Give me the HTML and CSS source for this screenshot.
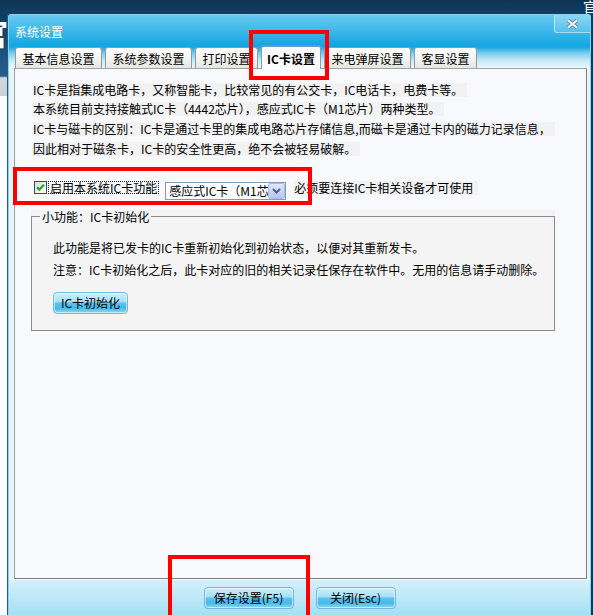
FILE: index.html
```html
<!DOCTYPE html>
<html lang="zh-CN">
<head>
<meta charset="utf-8">
<title>系统设置</title>
<link rel="stylesheet" href="styles.css">
</head>
<body>
<div class="topbar"><span class="top-glyph">官</span></div>
<div class="main">
  <div class="leftstrip"><span class="left-glyph">官</span></div>
  <div class="dialog">
    <div class="titlebar">
      <span class="title">系统设置</span>
      <div class="close">
        <svg width="13" height="10" viewBox="0 0 13 10">
          <path d="M2 1.5 L11 8.5 M11 1.5 L2 8.5" stroke="#6f8796" stroke-width="4" fill="none"/>
          <path d="M2 1.5 L11 8.5 M11 1.5 L2 8.5" stroke="#eef3f6" stroke-width="2.2" fill="none"/>
        </svg>
      </div>
    </div>
    <div class="tabs">
      <div class="tab">基本信息设置</div>
      <div class="tab">系统参数设置</div>
      <div class="tab">打印设置</div>
      <div class="tab active">IC卡设置</div>
      <div class="tab">来电弹屏设置</div>
      <div class="tab">客显设置</div>
    </div>
    <div class="panel">
      <div class="intro">
        <p><span>IC卡是指集成电路卡，又称智能卡，比较常见的有公交卡，IC电话卡，电费卡等。</span></p>
        <p><span>本系统目前支持接触式IC卡（4442芯片），感应式IC卡（M1芯片）两种类型。</span></p>
        <p><span>IC卡与磁卡的区别：IC卡是通过卡里的集成电路芯片存储信息,而磁卡是通过卡内的磁力记录信息，</span></p>
        <p><span>因此相对于磁条卡，IC卡的安全性更高，绝不会被轻易破解。</span></p>
      </div>
      <div class="enable">
        <span class="cb">
          <svg width="11" height="11" viewBox="0 0 11 11"><path d="M2 5.2 L4.3 7.6 L9 2.8" stroke="#22a322" stroke-width="2.2" fill="none"/></svg>
        </span>
        <span class="cblabel">启用本系统IC卡功能</span>
        <div class="combo">
          <span class="combo-text">感应式IC卡（M1芯片）</span>
          <span class="combo-btn">
            <svg width="15" height="14" viewBox="0 0 15 14"><path d="M4 5 L7.5 8.5 L11 5" stroke="#4d6185" stroke-width="2" fill="none"/></svg>
          </span>
        </div>
        <span class="hint">必须要连接IC卡相关设备才可使用</span>
      </div>
      <fieldset class="group">
        <legend>小功能：IC卡初始化</legend>
        <div class="gbody">
          <p>此功能是将已发卡的IC卡重新初始化到初始状态，以便对其重新发卡。</p>
          <p>注意：IC卡初始化之后，此卡对应的旧的相关记录任保存在软件中。无用的信息请手动删除。</p>
          <button class="btn btn-ic">IC卡初始化</button>
        </div>
      </fieldset>
    </div>
    <div class="footer">
      <button class="btn btn-save">保存设置(F5)</button>
      <button class="btn btn-close">关闭(Esc)</button>
    </div>
  </div>
  <div class="rightstrip"></div>
</div>
<div class="mark mark-tab"></div>
<div class="mark mark-enable"></div>
<div class="mark mark-save"></div>
</body>
</html>
```

FILE: styles.css
```css
html, body {
  margin: 0;
  padding: 0;
}
body {
  position: relative;
  width: 593px;
  height: 615px;
  overflow: hidden;
  background: #0f3b5f;
  font-family: "Noto Sans CJK SC", "Liberation Sans", sans-serif;
  font-size: 12px;
  color: #000;
}
.topbar {
  height: 14px;
  display: flex;
  justify-content: flex-end;
  overflow: hidden;
  background: linear-gradient(#0d3455, #113e62);
}
.top-glyph {
  color: #fff;
  font-size: 14px;
  line-height: 13px;
  margin-right: -4px;
}
.main {
  display: flex;
  height: 601px;
}
.leftstrip {
  width: 8px;
  flex: none;
  overflow: hidden;
  background: linear-gradient(#0f3a5e 0, #235f8f 62px, #d3d9de 64px, #c9d0d6 82px, #fbfcfd 82px);
  box-shadow: inset -1px 0 0 #1f5d82;
}
.left-glyph {
  display: block;
  color: #fff;
  font-size: 30px;
  font-weight: bold;
  line-height: 30px;
  margin: 3px 0 0 -22px;
}
.rightstrip {
  width: 2px;
  flex: none;
  background: #0f3a5e;
}
.dialog {
  width: 583px;
  flex: none;
  box-sizing: border-box;
  display: flex;
  flex-direction: column;
  border: 1px solid #86d2f1;
  border-bottom: none;
  border-radius: 3px 3px 0 0;
  background: #e9f5fa;
}
.titlebar {
  height: 29px;
  display: flex;
  justify-content: space-between;
  align-items: flex-start;
  background: linear-gradient(#66caf0 0%, #3db8e9 55%, #18a7e1 100%);
}
.title {
  color: #fff;
  margin: 10px 0 0 6px;
  line-height: 14px;
}
.close {
  width: 35px;
  height: 17px;
  display: flex;
  align-items: center;
  justify-content: center;
  background: linear-gradient(#8ad8f4, #55c1ec);
  border-left: 1px solid #b8e8f9;
  border-bottom: 1px solid #a3ddf4;
  border-radius: 0 0 0 3px;
}
.tabs {
  position: relative;
  z-index: 1;
  height: 24px;
  display: flex;
  align-items: flex-end;
  gap: 3px;
  padding-left: 6px;
  background: linear-gradient(#16a6e1 0, #18a7e1 3px, #86d0ef 10px, #cbebf7 17px, #eaf7fc 24px);
}
.tab {
  height: 21px;
  box-sizing: border-box;
  padding: 3px 6.5px 0;
  line-height: 16px;
  border: 1px solid #8f9aa5;
  border-bottom: none;
  border-radius: 3px 3px 0 0;
  background: linear-gradient(#ffffff, #f4f4f1 50%, #e5e5e1);
  white-space: nowrap;
}
.tab.active {
  height: 24px;
  margin-bottom: -1px;
  padding: 4px 5px 0;
  font-weight: bold;
  border-color: #7f9db9;
  border-top: 2px solid #6b97c4;
  background: #fcfcfe;
}
.panel {
  height: 511px;
  box-sizing: border-box;
  margin: 0 3px 0 5px;
  border: 1px solid;
  border-color: #a3a3a3 #7e7e7e #808080 #a0a0a0;
  background: #f8f9fd;
}
.intro {
  padding: 9px 0 0 17px;
}
.intro p {
  margin: 0;
  height: 19.7px;
  line-height: 19.7px;
}
.intro span {
  display: inline-block;
  vertical-align: middle;
  line-height: 14px;
  padding: 0 4px 0 1px;
  background: #f2f2f2;
}
.enable {
  display: flex;
  align-items: flex-start;
  height: 20px;
  margin-top: 23px;
  padding-left: 19px;
}
.cb {
  width: 13px;
  height: 13px;
  box-sizing: border-box;
  margin-top: 1px;
  border: 1px solid #1c5180;
  background: linear-gradient(135deg, #dcdcd6, #ffffff);
  display: flex;
}
.cblabel {
  margin: 1px 0 0 1px;
  padding: 0 1px;
  line-height: 11px;
  border: 1px dotted #222;
  white-space: nowrap;
}
.combo {
  width: 121px;
  height: 18px;
  box-sizing: border-box;
  margin: 2px 0 0 6px;
  border: 1px solid #7f9db9;
  background: #fff;
  display: flex;
}
.combo-text {
  flex: 1;
  overflow: hidden;
  white-space: nowrap;
  padding-left: 3px;
  line-height: 16px;
}
.combo-btn {
  width: 17px;
  height: 16px;
  box-sizing: border-box;
  flex: none;
  display: flex;
  align-items: center;
  justify-content: center;
  border: 1px solid #a9bde6;
  border-radius: 2px;
  background: linear-gradient(#dfe8fb, #c3d3f6 60%, #b5c8f2);
}
.hint {
  margin: 1px 0 0 7px;
  padding: 0 5px 0 1px;
  line-height: 14px;
  background: #f2f2f2;
  white-space: nowrap;
}
.group {
  width: 524px;
  box-sizing: border-box;
  margin: 11px 0 0 16px;
  padding: 14px 0 16px 8px;
  min-width: 0;
  border: 1px solid #8c8c8c;
  background: #f4f4f4;
  box-shadow: 0 -6px 0 #f4f4f4;
}
.group legend {
  padding: 0 2px;
  line-height: 12px;
  font-size: 12px;
}
.gbody {
  padding-left: 13px;
}
.gbody p {
  margin: 0;
  line-height: 22px;
  white-space: nowrap;
}
.btn {
  height: 22px;
  box-sizing: border-box;
  padding: 0;
  border: 1px solid #70b9e0;
  border-radius: 4px;
  background: linear-gradient(#cdeefb 0%, #a9e1f7 42%, #5ac3ee 52%, #46b9ea 75%, #8ed8f5 100%);
  box-shadow: inset 0 0 0 1px rgba(255, 255, 255, 0.55);
  font-family: "Noto Sans CJK SC", "Liberation Sans", sans-serif;
  font-size: 12px;
  line-height: 20px;
  color: #000;
}
.btn-ic {
  display: block;
  width: 75px;
  margin-top: 11px;
}
.footer {
  flex: 1;
  display: flex;
  justify-content: center;
  align-items: flex-start;
  gap: 22px;
  padding-top: 8px;
  background: linear-gradient(#d7f1fb, #a4dff3);
  box-shadow: inset 0 1px 0 #eef9fd;
}
.btn-save {
  width: 90px;
}
.btn-close {
  width: 80px;
}
.mark {
  position: absolute;
  box-sizing: border-box;
  border: 4px solid #ff0000;
  z-index: 5;
}
.mark-tab {
  left: 249px;
  top: 30px;
  width: 80px;
  height: 50px;
}
.mark-enable {
  left: 13px;
  top: 167px;
  width: 299px;
  height: 38px;
}
.mark-save {
  left: 168px;
  top: 555px;
  width: 142px;
  height: 70px;
}
```
